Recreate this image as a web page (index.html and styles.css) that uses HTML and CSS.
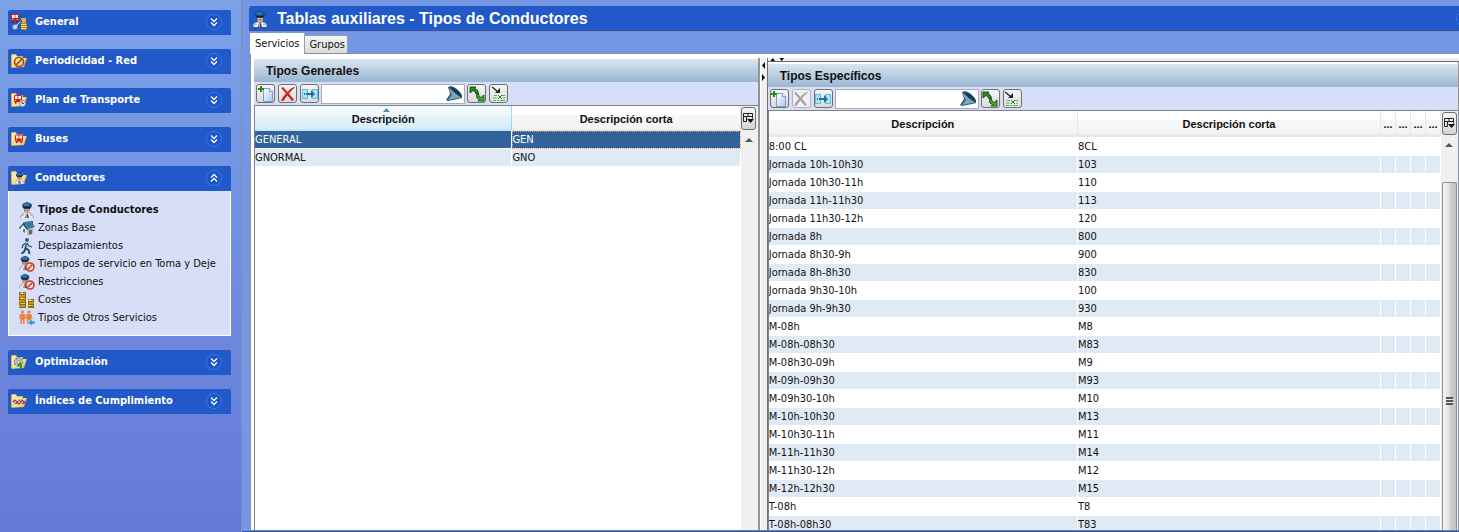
FILE: index.html
```html
<!DOCTYPE html>
<html lang="es">
<head>
<meta charset="utf-8">
<title>Tablas auxiliares - Tipos de Conductores</title>
<link rel="stylesheet" href="styles.css">
</head>
<body>
<svg class="defs" aria-hidden="true">
  <linearGradient id="gFolder" x1="0" y1="0" x2="1" y2="1"><stop offset="0" stop-color="#fff6bd"/><stop offset="1" stop-color="#ecc968"/></linearGradient>
  <linearGradient id="gPage" x1="0" y1="0" x2="1" y2="1"><stop offset="0" stop-color="#ffffff"/><stop offset="1" stop-color="#a9c8f4"/></linearGradient>
  <symbol id="folder" viewBox="0 0 16 16"><path d="M0 2l1-1h4l1 2h6v2h4l-3 9-12 1-1-1z" fill="#d9b557"/><path d="M1 2h4l1 2h5v2H4L1 13z" fill="#f9e9a2"/><path d="M4 6l11-1-3 9-11 0z" fill="url(#gFolder)"/></symbol>
  <symbol id="bus" viewBox="0 0 8 9"><path d="M1 0h6l1 1v6H0V1z" fill="#e3141c"/><path d="M1 1h2.600v3H1zM4.400 1H7v3H4.400z" fill="#fff"/><path d="M1 5h1v1H1zM6 5h1v1H6z" fill="#ffd9a0"/><path d="M1 7h1.500v1.500H1zM5.500 7H7v1.500H5.500z" fill="#5a1010"/></symbol>
  <symbol id="driver" viewBox="0 0 16 16"><path d="M5 5h6v4q-1 3-3 3t-3-3z" fill="#dfa27e"/><path d="M5 8h1v1H5zM8 8h1v1H8z" fill="#7d4a36"/><path d="M3 4q0-3 5-4 5 1 5 4l-2 3H5z" fill="#1a4273"/><path d="M4 2q4-2 7 0l-1 2H5z" fill="#3a73a8"/><path d="M4 5h7l1 1H4z" fill="#0e1f38"/><path d="M1 16q0-5 5-5l2 2 2-2q5 0 5 5z" fill="#eceef3"/><path d="M1.500 16q0-4 4-5M14.500 16q0-4-4-5" fill="none" stroke="#959cab"/><path d="M7 12h2l1 4H6z" fill="#4a5263"/><path d="M7 12h1v4H7z" fill="#9aa2b0"/><path d="M2 13.500h3M11 13.500h3" stroke="#b5bac6"/></symbol>
  <symbol id="forbid" viewBox="0 0 10 10"><circle cx="5" cy="5" r="4" fill="#f8dcd5" stroke="#c4402c" stroke-width="1.600"/><path d="M2.500 7.500l5-5" stroke="#c4402c" stroke-width="1.600"/></symbol>
  <symbol id="driverNo" viewBox="0 0 16 16"><use href="#driver" x="-1" y="0" width="14" height="14"/><use href="#forbid" x="6" y="6" width="10" height="10"/></symbol>
  <symbol id="general" viewBox="0 0 16 16"><use href="#bus" x="0" y="0" width="8" height="9"/><circle cx="4" cy="13" r="2.500" fill="#c5d6ec" stroke="#6b86ad"/><path d="M6 11l3-3M4 13l2-2" stroke="#e7f0fb"/><path d="M9 4q1-3 4-3 3 0 3 3z" fill="#12658e"/><path d="M10 4h5v4l-2 2-3-1z" fill="#dfa37d"/><path d="M9 6h2v3H9z" fill="#2c7aa2"/><path d="M10 9h6v7h-6z" fill="#b88a16"/><path d="M10 10.500h5M10 12.500h6M10 14.500h5" stroke="#f8d84c"/></symbol>
  <symbol id="fNet" viewBox="0 0 16 16"><use href="#folder"/><circle cx="8" cy="9" r="4.500" fill="none" stroke="#a84a1c" stroke-width="1.700"/><path d="M5 12l6-6" stroke="#a84a1c" stroke-width="1.700"/></symbol>
  <symbol id="fPlan" viewBox="0 0 16 16"><use href="#folder"/><use href="#bus" x="3" y="3" width="8" height="9"/><circle cx="11.500" cy="11.500" r="3" fill="#dfe7ef" stroke="#8893a1"/><path d="M11 9.500v2h2" stroke="#465260" fill="none"/></symbol>
  <symbol id="fBus" viewBox="0 0 16 16"><use href="#folder"/><use href="#bus" x="4" y="3" width="8" height="10"/></symbol>
  <symbol id="fDriver" viewBox="0 0 16 16"><use href="#folder"/><use href="#driver" x="3" y="2" width="11" height="12"/></symbol>
  <symbol id="fOpt" viewBox="0 0 16 16"><use href="#folder"/><circle cx="7.500" cy="8" r="4" fill="#c5cfc9" stroke="#7d8c86" stroke-width="1.500" stroke-dasharray="2 1"/><circle cx="7.500" cy="8" r="1.500" fill="#f4f7f5" stroke="#7d8c86"/><path d="M6 11l4-3v2h1v5H9v-2z" fill="#2d9c2c"/></symbol>
  <symbol id="fIdx" viewBox="0 0 16 16"><use href="#folder"/><path d="M2 9l2-2 4 4 3-4 3 3" fill="none" stroke="#d92828" stroke-width="1.200"/><path d="M2 8l3 3 3-4 4 4 2-3" fill="none" stroke="#254fae" stroke-width="1.100" stroke-dasharray="1.500 .7"/></symbol>
  <symbol id="house" viewBox="0 0 16 16"><path d="M2 7l5-4 7 3v7l-5 2-7-3z" fill="#e4ebf1"/><path d="M8 8l6-2v7l-6 2z" fill="#a7b6c4"/><path d="M0 8l5-6 4 7-1 1-4-5-3 4z" fill="#23556f"/><path d="M5 2l7-1 4 6-7 2z" fill="#397b9c"/><path d="M12 1h2v4z" fill="#77513f"/><path d="M4 9h2v4l-2-1z" fill="#786d6b"/><path d="M10 10h3v4l-3 1z" fill="#5e6c79"/></symbol>
  <symbol id="walk" viewBox="0 0 16 16"><g fill="none" stroke="#244d72" stroke-width="2"><path d="M7.500 5l-1 5 3 2 1 4M6.500 10l-1 3-3 3"/><path d="M7 5L4 7 3 10M8 5l2 3 3 1" stroke-width="1.300"/></g><circle cx="8" cy="2" r="2" fill="#2f5b83"/><path d="M7 5v4" stroke="#7ea0bc"/></symbol>
  <symbol id="coins" viewBox="0 0 16 16"><path d="M0 0h7v16H0zM9 7h6v9H9z" fill="#8f6810"/><path d="M1 1.500h5M0 4h6M1 6.500h5M0 9h6M1 11.500h5M0 14h6M9 8.500h5M10 11h5M9 13.500h5" stroke="#f0c63a" stroke-width="1.200"/><path d="M2 1h2M2 6h2M10 8h2" stroke="#fff6b0"/></symbol>
  <symbol id="people" viewBox="0 0 16 16"><g fill="#e8823c"><circle cx="3.500" cy="2" r="1.600"/><circle cx="10" cy="2" r="1.600"/><path d="M1 4h5l1 5H6L5.500 6v8H4v-4H3v4H1.500V6L1 9H0zM7.500 4h5l1 5h-1L12 6v8h-1.500v-4h-1v4H8V6L7.500 9h-1z"/></g><path d="M9 12.500l4-3.500v2h3v3h-3v2z" fill="#299bd6" stroke="#d6dff7" stroke-width=".5"/></symbol>
  <symbol id="down" viewBox="0 0 16 16"><circle cx="8" cy="8" r="7.500" fill="#1d55c8" stroke="#3678ec"/><path d="M5 4.500l3 3 3-3M5 8.500l3 3 3-3" fill="none" stroke="#fff" stroke-width="1.300"/></symbol>
  <symbol id="up" viewBox="0 0 16 16"><circle cx="8" cy="8" r="7.500" fill="#1d55c8" stroke="#3678ec"/><path d="M5 7.500l3-3 3 3M5 11.500l3-3 3 3" fill="none" stroke="#fff" stroke-width="1.300"/></symbol>
  <symbol id="new" viewBox="0 0 16 16"><path d="M5.500 2.500h6l3 3v10h-9z" fill="url(#gPage)" stroke="#7f9cc8"/><path d="M11.500 2.500v3h3" fill="#fff" stroke="#7f9cc8"/><path d="M3 0v6M0 3h6" stroke="#1d8d14" stroke-width="2"/></symbol>
  <symbol id="cross" viewBox="0 0 16 16"><path d="M1 2l2-1 4.500 5q3-4 6.500-5l1 .5q-3 2-6 6l5 6.500-2 1-4.500-5.500Q5 12 3.500 15L1 14.500q2-4 5-7z" fill="currentColor"/></symbol>
  <symbol id="move" viewBox="0 0 16 16"><path d="M.5 3.500h5v9h-5zM10.500 3.500h5v9h-5z" fill="#a8e6fb" stroke="#5dbbe2"/><path d="M2 7h1v2H2zM4 7h5V4l4 4-4 4V9H4z" fill="#1e6f99"/></symbol>
  <symbol id="funnel" viewBox="0 0 17 15"><path d="M2 1l3-1q7 2 11 9v3l-4 1-5 1-5 1-2-1 4-6z" fill="#2f6079"/><path d="M2 2q4 2 7 5l6 5-3 0-5 1-5 1 4-5z" fill="#7ea6b8"/><path d="M4 1q8 1 12 10Q8 8 4 1z" fill="#163a4f"/></symbol>
  <symbol id="refresh" viewBox="0 0 16 16"><path d="M1 7V1h6L5.500 2.500Q9 3 9.500 8l-2.500 0Q6.500 5 4 4.500z" fill="#2f8a1c" stroke="#123f10" stroke-width=".9"/><path d="M15 9v6H9l1.500-1.500Q7 13 7.500 8.500l2-1Q9.500 11 12 11.500z" fill="#46a822" stroke="#155012" stroke-width=".9"/></symbol>
  <symbol id="excel" viewBox="0 0 16 16"><path d="M4 7h10l1 9H1z" fill="#e2f1e1"/><path d="M3 9.500h3M11 9.500h3M2 12h4M12 12h2M2 14.500h3M6 14.500h2M9 14.500h5" stroke="#5ba35f"/><path d="M7 9l4 4M11 9l-4 4" stroke="#2b7a36"/><path d="M1 1l5 4" stroke="#222" stroke-width="1.500"/><path d="M9 2v5H4z" fill="#222"/></symbol>
  <symbol id="columns" viewBox="0 0 11 11"><path d="M.5 8.500v-8h9v5M.5 3.500h9M5 .5v3M.5 8.500h3v-5" fill="none" stroke="#222"/><path d="M4 6h7L7.500 10z" fill="#111"/></symbol>
</svg>

<div class="app">
  <nav class="side">
    <section class="group"><button class="group-head"><svg class="ico"><use href="#general"/></svg><span>General</span><svg class="ico"><use href="#down"/></svg></button></section>
    <section class="group"><button class="group-head"><svg class="ico"><use href="#fNet"/></svg><span>Periodicidad - Red</span><svg class="ico"><use href="#down"/></svg></button></section>
    <section class="group"><button class="group-head"><svg class="ico"><use href="#fPlan"/></svg><span>Plan de Transporte</span><svg class="ico"><use href="#down"/></svg></button></section>
    <section class="group"><button class="group-head"><svg class="ico"><use href="#fBus"/></svg><span>Buses</span><svg class="ico"><use href="#down"/></svg></button></section>
    <section class="group"><button class="group-head" aria-expanded="true"><svg class="ico"><use href="#fDriver"/></svg><span>Conductores</span><svg class="ico"><use href="#up"/></svg></button>
      <div class="group-body">
        <a class="item current" href="#"><svg class="ico"><use href="#driver"/></svg>Tipos de Conductores</a>
        <a class="item" href="#"><svg class="ico"><use href="#house"/></svg>Zonas Base</a>
        <a class="item" href="#"><svg class="ico"><use href="#walk"/></svg>Desplazamientos</a>
        <a class="item" href="#"><svg class="ico"><use href="#driverNo"/></svg>Tiempos de servicio en Toma y Deje</a>
        <a class="item" href="#"><svg class="ico"><use href="#driverNo"/></svg>Restricciones</a>
        <a class="item" href="#"><svg class="ico"><use href="#coins"/></svg>Costes</a>
        <a class="item" href="#"><svg class="ico"><use href="#people"/></svg>Tipos de Otros Servicios</a>
      </div>
    </section>
    <section class="group"><button class="group-head"><svg class="ico"><use href="#fOpt"/></svg><span>Optimización</span><svg class="ico"><use href="#down"/></svg></button></section>
    <section class="group"><button class="group-head"><svg class="ico"><use href="#fIdx"/></svg><span>Índices de Cumplimiento</span><svg class="ico"><use href="#down"/></svg></button></section>
  </nav>

  <main class="main">
    <header class="title"><svg class="ico"><use href="#driver"/></svg><h1>Tablas auxiliares - Tipos de Conductores</h1><button class="title-btn" aria-label="Contraer"><svg class="ico"><use href="#up"/></svg></button></header>
    <div class="tabs"><button class="tab on">Servicios</button><button class="tab">Grupos</button></div>
    <div class="split">
      <section class="pane pane-left">
        <h2>Tipos Generales</h2>
        <div class="tools">
          <button class="tool" aria-label="Nuevo"><svg class="ico"><use href="#new"/></svg></button>
          <button class="tool red" aria-label="Eliminar"><svg class="ico"><use href="#cross"/></svg></button>
          <button class="tool" aria-label="Mover"><svg class="ico"><use href="#move"/></svg></button>
          <div class="filter"><input type="text" aria-label="Filtro"><svg class="funnel"><use href="#funnel"/></svg></div>
          <button class="tool" aria-label="Refrescar"><svg class="ico"><use href="#refresh"/></svg></button>
          <button class="tool" aria-label="Exportar"><svg class="ico"><use href="#excel"/></svg></button>
        </div>
        <div class="grid">
          <div class="rows">
            <table>
              <colgroup><col class="c-main"><col></colgroup>
              <thead><tr><th class="sorted">Descripción<svg class="sort" viewBox="0 0 7 4"><path d="M0 4l3.500-4L7 4z" fill="#5a8faf"/></svg></th><th>Descripción corta</th></tr></thead>
              <tbody>
                <tr class="sel"><td>GENERAL</td><td class="focus">GEN</td></tr>
                <tr class="alt"><td>GNORMAL</td><td>GNO</td></tr>
              </tbody>
            </table>
          </div>
          <div class="rail"><button class="cols" aria-label="Columnas"><svg><use href="#columns"/></svg></button><div class="arrow"></div></div>
        </div>
      </section>
      <div class="divider"><svg viewBox="0 0 6 30"><path d="M4 4v7L1 7.500zM1 16v7l3-3.500z"/></svg></div>
      <div class="right">
        <div class="hdivider"><svg viewBox="0 0 20 4"><path d="M0 4h6L3 0zM12 0h6l-3 4z"/></svg></div>
        <section class="pane pane-right">
          <h2>Tipos Específicos</h2>
          <div class="tools">
            <button class="tool" aria-label="Nuevo"><svg class="ico"><use href="#new"/></svg></button>
            <button class="tool off" aria-label="Eliminar" disabled><svg class="ico"><use href="#cross"/></svg></button>
            <button class="tool" aria-label="Mover"><svg class="ico"><use href="#move"/></svg></button>
            <div class="filter"><input type="text" aria-label="Filtro"><svg class="funnel"><use href="#funnel"/></svg></div>
            <button class="tool" aria-label="Refrescar"><svg class="ico"><use href="#refresh"/></svg></button>
            <button class="tool" aria-label="Exportar"><svg class="ico"><use href="#excel"/></svg></button>
          </div>
          <div class="grid">
            <div class="rows">
              <table>
                <colgroup><col class="c-desc"><col><col class="c-tiny"><col class="c-tiny"><col class="c-tiny"><col class="c-tiny"></colgroup>
                <thead><tr><th>Descripción</th><th>Descripción corta</th><th class="dots">...</th><th class="dots">...</th><th class="dots">...</th><th class="dots">...</th></tr></thead>
                <tbody>
                  <tr class="alt cut"><td></td><td></td><td></td><td></td><td></td><td></td></tr>
                  <tr><td>8:00 CL</td><td>8CL</td><td></td><td></td><td></td><td></td></tr>
                  <tr class="alt"><td>Jornada 10h-10h30</td><td>103</td><td></td><td></td><td></td><td></td></tr>
                  <tr><td>Jornada 10h30-11h</td><td>110</td><td></td><td></td><td></td><td></td></tr>
                  <tr class="alt"><td>Jornada 11h-11h30</td><td>113</td><td></td><td></td><td></td><td></td></tr>
                  <tr><td>Jornada 11h30-12h</td><td>120</td><td></td><td></td><td></td><td></td></tr>
                  <tr class="alt"><td>Jornada 8h</td><td>800</td><td></td><td></td><td></td><td></td></tr>
                  <tr><td>Jornada 8h30-9h</td><td>900</td><td></td><td></td><td></td><td></td></tr>
                  <tr class="alt"><td>Jornada 8h-8h30</td><td>830</td><td></td><td></td><td></td><td></td></tr>
                  <tr><td>Jornada 9h30-10h</td><td>100</td><td></td><td></td><td></td><td></td></tr>
                  <tr class="alt"><td>Jornada 9h-9h30</td><td>930</td><td></td><td></td><td></td><td></td></tr>
                  <tr><td>M-08h</td><td>M8</td><td></td><td></td><td></td><td></td></tr>
                  <tr class="alt"><td>M-08h-08h30</td><td>M83</td><td></td><td></td><td></td><td></td></tr>
                  <tr><td>M-08h30-09h</td><td>M9</td><td></td><td></td><td></td><td></td></tr>
                  <tr class="alt"><td>M-09h-09h30</td><td>M93</td><td></td><td></td><td></td><td></td></tr>
                  <tr><td>M-09h30-10h</td><td>M10</td><td></td><td></td><td></td><td></td></tr>
                  <tr class="alt"><td>M-10h-10h30</td><td>M13</td><td></td><td></td><td></td><td></td></tr>
                  <tr><td>M-10h30-11h</td><td>M11</td><td></td><td></td><td></td><td></td></tr>
                  <tr class="alt"><td>M-11h-11h30</td><td>M14</td><td></td><td></td><td></td><td></td></tr>
                  <tr><td>M-11h30-12h</td><td>M12</td><td></td><td></td><td></td><td></td></tr>
                  <tr class="alt"><td>M-12h-12h30</td><td>M15</td><td></td><td></td><td></td><td></td></tr>
                  <tr><td>T-08h</td><td>T8</td><td></td><td></td><td></td><td></td></tr>
                  <tr class="alt"><td>T-08h-08h30</td><td>T83</td><td></td><td></td><td></td><td></td></tr>
                </tbody>
              </table>
            </div>
            <div class="rail"><button class="cols" aria-label="Columnas"><svg><use href="#columns"/></svg></button><div class="arrow"></div><div class="thumb"><i></i></div></div>
          </div>
        </section>
      </div>
    </div>
  </main>
</div>
</body>
</html>
```
FILE: styles.css
```css
* { box-sizing: border-box; }
body { margin: 0; font: 11px/18px "DejaVu Sans Condensed", Tahoma, "DejaVu Sans", sans-serif; color: #111; background: #7596e3; }
button { font: inherit; color: inherit; padding: 0; margin: 0; border: 0; background: none; }
svg { display: block; flex: none; }
.defs { position: absolute; width: 0; height: 0; }
.ico { width: 16px; height: 16px; }

.app { display: flex; height: 100vh; overflow: hidden; }

/* Task pane */
.side { flex: none; width: 242px; padding: 10px 10px 0 8px; border-right: 1px solid #7f8db5; background: linear-gradient(#7ba2e7, #6579d7); display: flex; flex-direction: column; gap: 14px; }
.group-head { display: flex; align-items: center; width: 100%; height: 25px; padding: 0 9px 1px 3px; gap: 8px; background: #2159c9; border-radius: 2px 2px 0 0; color: #fff; font-weight: bold; text-align: left; }
.group-head span { flex: 1; }
.group-body { padding: 10px 0 8px 10px; background: #d6dff7; border: 1px solid #fff; border-top: 0; }
.item { display: flex; align-items: center; gap: 3px; height: 18px; color: #111; text-decoration: none; white-space: nowrap; }
.item.current { font-weight: bold; }

/* Work area */
.main { flex: 1; min-width: 0; display: flex; flex-direction: column; padding: 6px 0 0 7px; border-bottom: 1px solid #2159c9; }
.title { display: flex; align-items: center; gap: 9px; height: 26px; padding-left: 3px; background: #2159c9; border-bottom: 1px solid #8590a8; border-radius: 3px 0 0 0; overflow: hidden; }
.title h1 { flex: 1; margin: 0; color: #fff; font: bold 16px/24px "Liberation Sans", Arial, sans-serif; }
.title-btn { margin-right: -13px; }
.tabs { display: flex; align-items: flex-end; height: 22px; padding-left: 1px; border-bottom: 1px solid #8590a8; }
.tab { height: 18px; padding: 0 2px 0 4px; border: 1px solid #9a9da5; border-width: 1px 1px 0 0; background: linear-gradient(#f4f4f4, #dcdcdc); }
.tab.on { height: 21px; padding: 0 5px; margin-bottom: -1px; background: #fff; border-top-color: #fff; line-height: 16px; }
.split { flex: 1; min-height: 0; display: flex; margin-left: 1px; padding: 4px 0 0 3px; background: #fff; border-left: 1px solid #8590a8; border-bottom: 1px solid #777d88; }

.pane { display: flex; flex-direction: column; min-height: 0; }
.pane-left { flex: 505 1 0; min-width: 0; padding-top: 1px; border-right: 2px solid #90959d; }
.pane-right { flex: 1; padding-top: 2px; border-right: 1px solid #90959d; }
.pane h2 { margin: 0; height: 23px; padding-left: 12px; background: linear-gradient(#dae6f1, #9ab6d1); font: bold 12px/24px "Liberation Sans", Arial, sans-serif; }
.tools { display: flex; align-items: center; gap: 3px; height: 23px; padding-left: 2px; background: #d6dff7; }
.tool { display: flex; align-items: center; justify-content: center; width: 19px; height: 19px; border: 1px solid #707070; border-radius: 3px; background: linear-gradient(#f6f6f6, #dadada); }
.tool.red { color: #d3221c; }
.tool.off { color: #a3a3a3; border-color: #b0b4bc; background: #f0f0f0; }
.filter { position: relative; width: 144px; height: 20px; margin: 0 -1px; }
.filter input { width: 100%; height: 100%; border: 1px solid #abadb3; background: #fff; padding: 0 20px 0 3px; font: inherit; }
.funnel { position: absolute; right: 2px; top: 2px; width: 17px; height: 15px; }

.grid { flex: 1; min-height: 0; display: flex; border-top: 1px solid #7d828c; border-left: 1px solid #7d828c; background: #fff; }
.rows { flex: 1; min-width: 0; overflow: hidden; }
table { width: 100%; table-layout: fixed; border-collapse: separate; border-spacing: 0; }
.c-main { width: 53%; }
.c-desc { width: 46%; }
.c-tiny { width: 15px; }
th { position: relative; height: 25px; padding: 2px 0 0; border-right: 1px solid #e6e7ea; border-bottom: 2px solid #e8e9eb; background: linear-gradient(#fff 40%, #f6f7f8 41%, #f2f3f5); font: bold 11px/18px "Liberation Sans", Arial, sans-serif; }
th.sorted { background: linear-gradient(#f2f9fc 40%, #e4f3fa 41%, #d8edf7); border-right-color: #96d9f9; border-bottom-color: #c4e6f5; }
.sort { position: absolute; left: 50%; top: 2px; width: 7px; height: 4px; }
th.dots { padding: 2px 1px 0; text-align: center; }
td { height: 18px; padding: 0; border-right: 1px solid #fff; border-bottom: 1px solid #fff; line-height: 17px; white-space: nowrap; overflow: hidden; }
.alt td { background: #e0eaf5; }
.cut td { height: 2px; line-height: 1px; }
.sel td { background: #31629c; color: #fff; }
.focus { outline: 1px dotted #e0a050; outline-offset: -1px; }

.rail { flex: none; width: 17px; padding: 1px 1px 0 0; background: #f0f0f0; display: flex; flex-direction: column; align-items: center; }
.cols { display: flex; align-items: center; justify-content: center; flex: none; width: 15px; height: 23px; border: 1px solid #707070; border-radius: 3px; background: linear-gradient(#f6f6f6, #d4d4d4); }
.cols svg { width: 11px; height: 11px; }
.arrow { flex: none; margin-top: 8px; border: 4px solid transparent; border-top: 0; border-bottom: 4px solid #555; }
.thumb { flex: 1; display: flex; align-items: center; justify-content: center; align-self: stretch; margin: 35px 0 0 1px; border: 1px solid #8f9197; border-bottom: 0; border-radius: 2px 2px 0 0; background: linear-gradient(90deg, #f5f5f5, #e4e4e6 45%, #cfcfd2 55%, #c2c2c6); }
.thumb i { width: 7px; height: 8px; margin-top: 88px; background: repeating-linear-gradient(#555 0 2px, #e8e8e8 2px 3px); }

.divider { flex: none; width: 8px; background: #f0f0f0; border-left: 1px solid #fff; border-right: 1px solid #6f747c; }
.divider svg { width: 6px; height: 30px; }
.right { flex: 693 1 0; min-width: 0; display: flex; flex-direction: column; }
.hdivider { height: 4px; background: #f0f0f0; border-bottom: 1px solid #666; }
.hdivider svg { width: 20px; height: 3px; }
```
